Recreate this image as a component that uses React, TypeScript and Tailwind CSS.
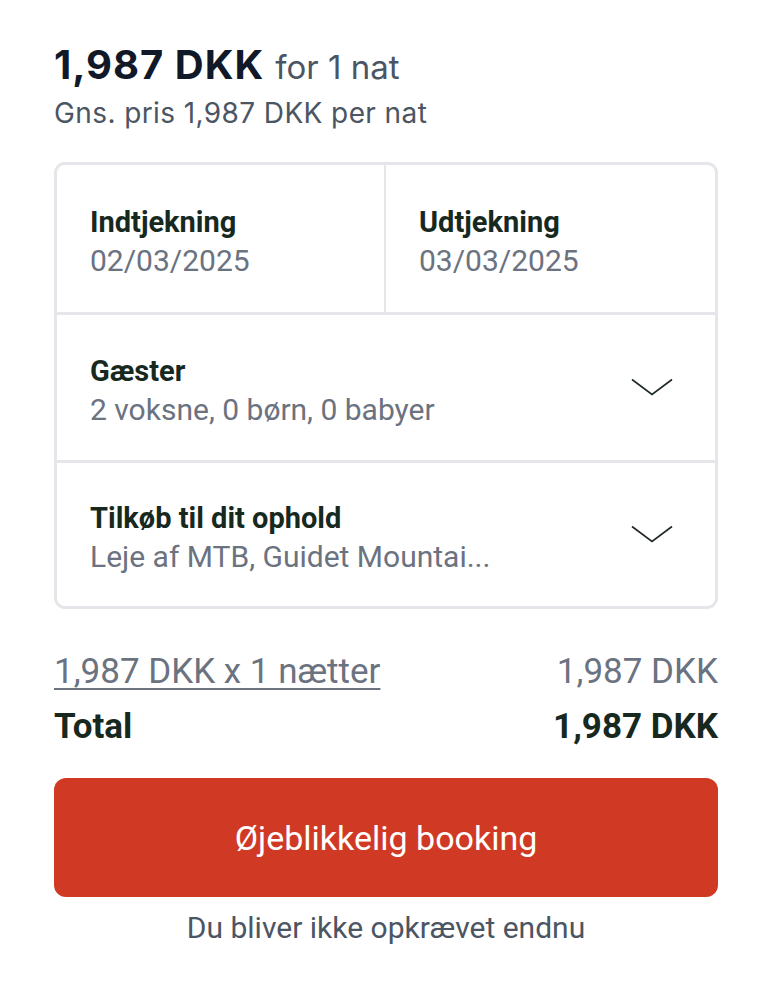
import React from "react";

const Chevron = () => (
  <svg width="42" height="20" viewBox="0 0 42 20" fill="none" className="shrink-0">
    <path d="M1 1.5 L21 16.5 L41 1.5" stroke="#1f2a24" strokeWidth="1.6" />
  </svg>
);

interface FieldProps {
  label: string;
  value: string;
  withChevron?: boolean;
}

const Field: React.FC<FieldProps> = ({ label, value, withChevron }) => (
  <div className="flex items-center justify-between h-full pl-[33px] pr-[42px]">
    <div className="pt-[6px]">
      <div className="text-[29px] font-bold leading-[34px] text-[#17291f]">{label}</div>
      <div className="text-[30px] leading-[36px] text-[#6b7280] mt-[4px] whitespace-nowrap">{value}</div>
    </div>
    {withChevron && <Chevron />}
  </div>
);

export default function App() {
  return (
    <div className="bg-white min-h-[988px] w-[772px] px-[54px] pt-[41px] font-['Roboto',sans-serif]">
      {/* Price header */}
      <div className="font-['Inter',sans-serif]">
        <div className="flex items-baseline gap-[11px]">
          <span className="text-[40px] font-bold text-[#111827] leading-[48px] tracking-[1px]">1,987 DKK</span>
          <span className="text-[33px] text-[#4b5563] leading-[48px]">for 1 nat</span>
        </div>
        <div className="text-[28px] text-[#4b5563] leading-[34px] mt-[5px] tracking-[0.4px]">Gns. pris 1,987 DKK per nat</div>
      </div>

      {/* Booking card */}
      <div className="mt-[32px] border-[3px] border-[#e6e6ea] rounded-[11px] overflow-hidden">
        <div className="grid grid-cols-2 h-[147px]">
          <div className="border-r-2 border-[#e6e6ea]">
            <Field label="Indtjekning" value="02/03/2025" />
          </div>
          <div>
            <Field label="Udtjekning" value="03/03/2025" />
          </div>
        </div>
        <div className="border-t-[3px] border-[#e6e6ea] h-[148px]">
          <Field label="Gæster" value="2 voksne, 0 børn, 0 babyer" withChevron />
        </div>
        <div className="border-t-[3px] border-[#e6e6ea] h-[146px]">
          <Field label="Tilkøb til dit ophold" value="Leje af MTB, Guidet Mountai..." withChevron />
        </div>
      </div>

      {/* Price breakdown */}
      <div className="mt-[42px] flex justify-between items-center text-[35px] leading-[42px]">
        <span className="text-[#6b7280] underline underline-offset-[5px] decoration-[2px]">1,987 DKK x 1 nætter</span>
        <span className="text-[#6b7280]">1,987 DKK</span>
      </div>
      <div className="mt-[13px] flex justify-between items-center text-[35px] leading-[42px] font-bold text-[#17291f]">
        <span>Total</span>
        <span>1,987 DKK</span>
      </div>

      {/* Action */}
      <button className="mt-[30px] w-full h-[119px] rounded-[12px] bg-[#d03a25] text-white text-[34px] leading-none">
        Øjeblikkelig booking
      </button>
      <div className="mt-[13px] text-center text-[30px] leading-[36px] text-[#4b5563]">Du bliver ikke opkrævet endnu</div>
    </div>
  );
}
